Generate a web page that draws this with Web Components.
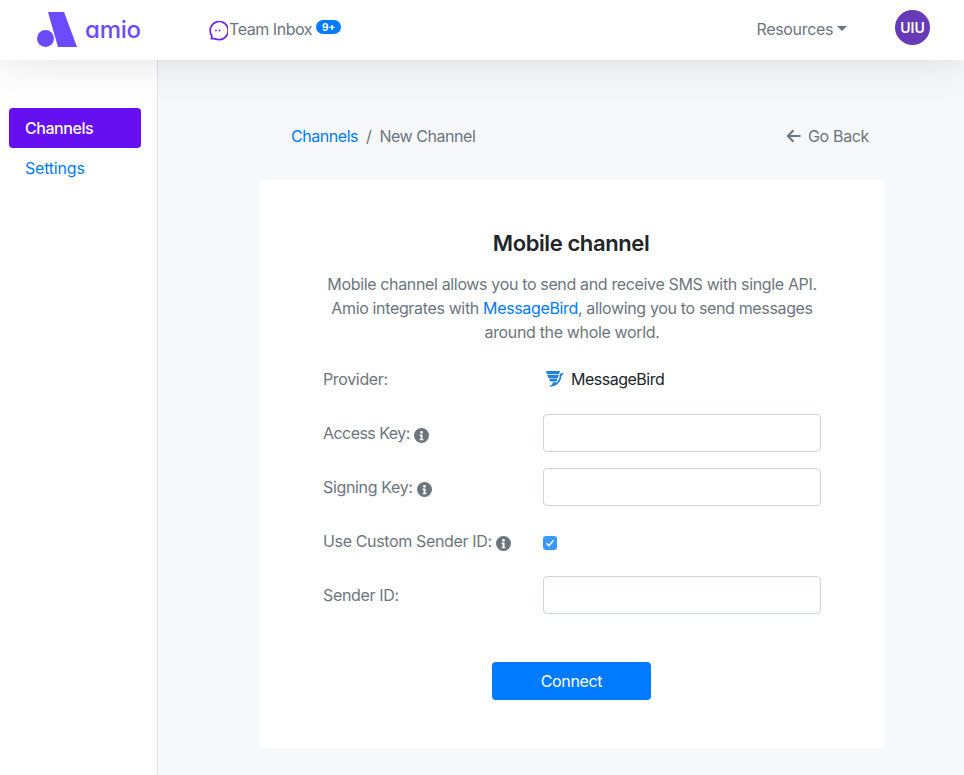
<!DOCTYPE html>
<html>
<head>
<meta charset="utf-8">
<title>New Channel</title>
<style>
    html, body { margin: 0; height: 100%; }
    body {
        font-family: "Inter", "Liberation Sans", sans-serif;
        font-size: 16px;
        line-height: 24px;
        color: #6c757d;
        letter-spacing: -0.35px;
    }
</style>
</head>
<body>
<amio-app></amio-app>

<template id="info-tpl">
<style>
    :host { display: inline-flex; margin: 5px 0 0 4px; }
    svg { width: 15px; height: 15px; display: block; }
</style>
<svg viewBox="0 0 16 16"><circle cx="8" cy="8" r="8" fill="#6c757d"/><circle cx="8" cy="4.600" r="1.500" fill="#fff"/><path d="M6 7h3.100v4.600h1v1.400H6v-1.400h1V8.400H6z" fill="#fff"/></svg>
</template>

<template id="header-tpl">
<style>
    :host {
        display: flex;
        align-items: center;
        height: 60px;
        background: #fff;
        box-shadow: 0 0 45px rgba(0,0,0,.13);
        position: relative;
        z-index: 2;
        padding: 0 34px 0 37px;
        box-sizing: border-box;
    }
    .logo { display: flex; align-items: center; gap: 8px; width: 171px; }
    .logo svg { display: block; }
    .logo span {
        font: 500 24px/1 "Inter", sans-serif;
        font-feature-settings: "cv11";
        color: #6c4bff;
        letter-spacing: -0.2px;
        margin-left: -1px;
    }
    .inbox { display: flex; align-items: center; flex: 1; }
    .inbox svg { display: block; margin: 2px 0 0 0; }
    .inbox > span:first-of-type { margin: -2px 0 0 1px; letter-spacing: -0.45px; }
    .badge {
        font: 700 10px/1 "Inter", sans-serif;
        letter-spacing: 0;
        background: #007bff;
        color: #fff;
        border-radius: 10px;
        padding: 2px 6px;
        margin: -6px 0 0 4px;
    }
    .res { display: flex; align-items: center; margin: -2px 48px 0 0; }
    .caret {
        border-top: 5px solid #6c757d;
        border-left: 5px solid transparent;
        border-right: 5px solid transparent;
        margin: -1px 0 0 4px;
    }
    .avatar {
        width: 35px; height: 35px;
        border-radius: 50%;
        background: #673ab7;
        color: #fff;
        font-size: 14px;
        font-weight: 600;
        letter-spacing: 0;
        display: flex; align-items: center; justify-content: center;
        margin-top: -5px;
    }
</style>
<div class="logo">
    <svg width="41" height="36" viewBox="0 0 41 36"><circle cx="8.500" cy="26.500" r="8.500" fill="#6c4bff"/><path d="M11 0H27L40 35H21z" fill="#6c4bff"/></svg>
    <span>amio</span>
</div>
<div class="inbox">
    <svg width="20" height="20" viewBox="1 1 20 20" fill="none"><path d="M4.400 18.600l.4-2.900A9 9 0 1 1 10.500 19.400c-1.800 0-3 -.5 -3.500 -.8z" stroke="#6c1ff0" stroke-width="1.700" stroke-linejoin="round"/><circle cx="9" cy="10.500" r=".9" fill="#6c1ff0"/><circle cx="12.500" cy="10.500" r=".9" fill="#6c1ff0"/></svg>
    <span>Team Inbox</span>
    <span class="badge">9+</span>
</div>
<div class="res"><span>Resources</span><i class="caret"></i></div>
<div class="avatar">UIU</div>
</template>

<template id="sidebar-tpl">
<style>
    :host {
        display: block;
        width: 158px;
        flex: none;
        box-sizing: border-box;
        background: #fff;
        border-right: 1px solid #dee2e6;
        padding: 48px 16px 0 9px;
    }
    a {
        display: block;
        height: 40px;
        line-height: 40px;
        padding: 0 16px;
        border-radius: 4px;
        color: #007bff;
        text-decoration: none;
        letter-spacing: -0.2px;
    }
    a.active { background: #6610f2; color: #fff; font-weight: 500; letter-spacing: -0.45px; }
</style>
<a class="active" href="#">Channels</a>
<a href="#">Settings</a>
</template>

<template id="crumbs-tpl">
<style>
    :host {
        display: flex;
        align-items: center;
        justify-content: space-between;
        box-sizing: border-box;
        width: 624px;
        height: 24px;
        padding: 0 15px 0 31px;
        margin-bottom: 32px;
    }
    a { color: #007bff; text-decoration: none; }
    .trail { letter-spacing: -0.45px; }
    .sep { padding: 0 8px; }
    .back { display: flex; align-items: center; gap: 7px; }
    svg { display: block; }
</style>
<div class="trail"><a href="#">Channels</a><span class="sep">/</span><span>New Channel</span></div>
<div class="back">
    <svg width="15" height="14" viewBox="0 0 15 14" fill="none"><path d="M14.500 7H2M7.500 1.300L1.800 7l5.700 5.700" stroke="#6c757d" stroke-width="2"/></svg>
    <span>Go Back</span>
</div>
</template>

<template id="row-tpl">
<style>
    :host {
        display: grid;
        grid-template-columns: 220px 278px;
        align-items: center;
        min-height: 38px;
        margin-bottom: 16px;
    }
    .lbl { display: flex; align-items: center; }
    .val { display: flex; align-items: center; }
</style>
<div class="lbl"><slot name="label"></slot></div>
<div class="val"><slot></slot></div>
</template>

<template id="input-tpl">
<style>
    :host { display: block; width: 100%; }
    input {
        display: block;
        width: 100%;
        height: 38px;
        box-sizing: border-box;
        border: 1px solid #ced4da;
        border-radius: 4px;
        background: #fff;
        padding: 6px 12px;
    }
</style>
<input type="text">
</template>

<template id="card-tpl">
<style>
    :host {
        display: block;
        background: #fff;
        border-radius: 4px;
        padding: 48px 63px;
        width: 624px;
        box-sizing: border-box;
    }
    h2 {
        margin: 0 0 14px;
        font-size: 22px;
        line-height: 30px;
        font-weight: 600;
        color: #212529;
        text-align: center;
        letter-spacing: -0.4px;
        position: relative;
        left: -1px;
    }
    p { margin: 0 0 16px; text-align: center; white-space: nowrap; }
    a { color: #007bff; text-decoration: none; }
    .bird { display: flex; align-items: center; gap: 7px; color: #212529; margin-top: -1px; }
    .bird svg { display: block; margin-left: 3px; }
    .bird span { letter-spacing: -0.5px; }
    .access { letter-spacing: -0.55px; }
    .check {
        width: 14px; height: 14px;
        background: #3b99fc;
        border-radius: 3px;
        display: flex;
        margin-top: 4px;
    }
    .actions { display: flex; justify-content: center; margin: 48px 1px 0 0; }
    button {
        width: 159px;
        height: 38px;
        border: 0;
        border-radius: 4px;
        background: #007bff;
        color: #fff;
        font: inherit;
        letter-spacing: inherit;
    }
    .last { margin-bottom: 0; }
</style>
<h2>Mobile channel</h2>
<p>Mobile channel allows you to send and receive SMS with single API.<br>Amio integrates with <a href="#">MessageBird</a>, allowing you to send messages<br>around the whole world.</p>
<form-row>
    <span slot="label">Provider:</span>
    <div class="bird">
        <svg width="18" height="16" viewBox="0 0 18 16" fill="#2481d7"><path d="M0 0h14L13 3.200H1zM1.300 3.900h11.500L11.800 6.900H2.400zM3 7.600h8.500L10.500 10.500H4.200z"/><path d="M13.800 2.800L18 1.500l-2.600 3.700C15 10.500 11 15.800 2.500 15.800 5 14.800 6.200 13.200 7 11.200h4L13.500 7z"/></svg>
        <span>MessageBird</span>
    </div>
</form-row>
<form-row>
    <span slot="label" class="access">Access Key:</span><info-icon slot="label"></info-icon>
    <text-field></text-field>
</form-row>
<form-row>
    <span slot="label">Signing Key:</span><info-icon slot="label"></info-icon>
    <text-field></text-field>
</form-row>
<form-row>
    <span slot="label">Use Custom Sender ID:</span><info-icon slot="label"></info-icon>
    <div class="check"><svg width="14" height="14" viewBox="0 0 14 14" fill="none"><path d="M3.500 7.300l2.400 2.500 4.600-5.500" stroke="#fff" stroke-width="1.400"/></svg></div>
</form-row>
<form-row class="last">
    <span slot="label">Sender ID:</span>
    <text-field></text-field>
</form-row>
<div class="actions"><button type="button">Connect</button></div>
</template>

<template id="app-tpl">
<style>
    :host { display: flex; flex-direction: column; height: 100vh; overflow: hidden; }
    .body { display: flex; flex: 1; min-height: 0; }
    main {
        flex: 1;
        background: #f7f8fb;
        padding: 64px 0 0 102px;
    }
</style>
<app-header></app-header>
<div class="body">
    <app-sidebar></app-sidebar>
    <main>
        <bread-crumbs></bread-crumbs>
        <channel-card></channel-card>
    </main>
</div>
</template>

<script>
    // every element here is just a template cloned into an open shadow root
    function define(tag, templateId){
        customElements.define(tag, class extends HTMLElement {
            constructor(){
                super();
                this.attachShadow({mode: 'open'});
                let template = document.getElementById(templateId);
                this.shadowRoot.append(template.content.cloneNode(true));
            }
        });
    }

    define('info-icon', 'info-tpl');
    define('app-header', 'header-tpl');
    define('app-sidebar', 'sidebar-tpl');
    define('bread-crumbs', 'crumbs-tpl');
    define('form-row', 'row-tpl');
    define('text-field', 'input-tpl');
    define('channel-card', 'card-tpl');
    define('amio-app', 'app-tpl');
</script>
</body>
</html>
